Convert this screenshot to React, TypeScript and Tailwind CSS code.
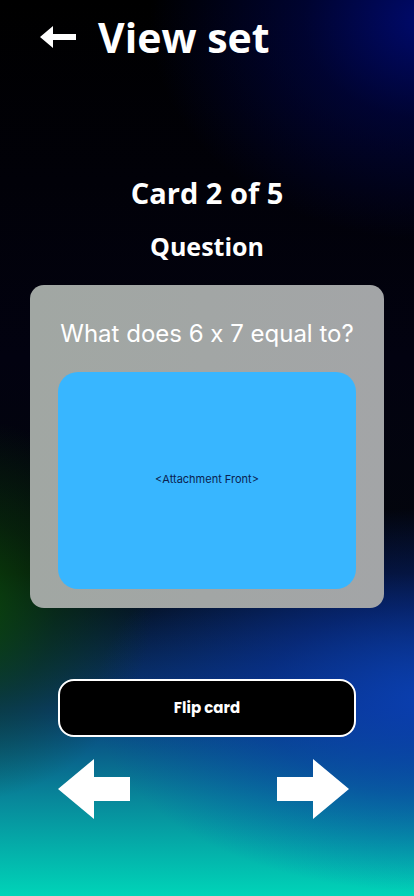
import React from "react";

function BlockArrow({ dir }: { dir: "left" | "right" }) {
  return (
    <svg width="72" height="60" viewBox="0 0 72 60" className={dir === "right" ? "scale-x-[-1]" : ""}>
      <polygon points="0,30 36,0 36,18 72,18 72,42 36,42 36,60" fill="#ffffff" />
    </svg>
  );
}

export default function App() {
  return (
    <div
      className="relative w-[414px] h-[896px] overflow-hidden bg-black bg-[radial-gradient(ellipse_280px_220px_at_430px_20px,#000a6e_0%,rgba(0,6,80,0.6)_45%,transparent_100%),radial-gradient(ellipse_420px_240px_at_430px_700px,#0a3fb0_0%,rgba(8,50,170,0.5)_40%,transparent_80%),radial-gradient(ellipse_240px_240px_at_-40px_610px,#0b4a0a_0%,rgba(10,60,10,0.5)_40%,transparent_80%),linear-gradient(180deg,#000000_0%,#020210_40%,#03060c_64%,#0a3a7a_79%,#08869a_89%,#00d4b8_100%)]"
      style={{ fontFamily: '"Open Sans", "Noto Sans", sans-serif' }}
    >
      <div className="flex flex-col items-center">
        <div className="flex items-center self-stretch pl-[40px] pt-[14px] h-[60px] gap-[22px]">
          <svg width="36" height="22" viewBox="0 0 36 22">
            <polygon points="0,11 13,0 13,8 36,8 36,14 13,14 13,22" fill="#ffffff" />
          </svg>
          <h1 className="text-[41px] font-bold text-white leading-none">View set</h1>
        </div>
        <div className="mt-[118px] text-[29px] font-bold text-white leading-none">Card 2 of 5</div>
        <div className="mt-[27px] text-[25px] font-bold text-white leading-none">Question</div>

        <div className="mt-[26px] w-[354px] h-[323px] rounded-[14px] bg-[linear-gradient(90deg,#a1a7a3_0%,#a3a5a7_100%)] flex flex-col items-center pt-[37px]">
          <p
            className="text-[24px] text-white leading-none font-normal"
            style={{ fontFamily: 'Inter, "Noto Sans", sans-serif', fontFeatureSettings: '"calt" 0' }}
          >
            What does 6 x 7 equal to?
          </p>
          <div className="mt-[26px] w-[298px] h-[217px] rounded-[20px] bg-[#38b6ff] flex items-center justify-center">
            <span
              className="text-[11px] text-[#0a2250] mt-[-2px]"
              style={{ fontFamily: 'Inter, "Noto Sans", sans-serif' }}
            >
              &lt;Attachment Front&gt;
            </span>
          </div>
        </div>

        <button
          className="mt-[71px] w-[298px] h-[58px] rounded-[16px] bg-black border-2 border-white text-white text-[15px] font-bold"
          style={{ fontFamily: 'Poppins, "Open Sans", sans-serif' }}
        >
          Flip card
        </button>

        <div className="mt-[22px] w-[298px] flex justify-between pr-[7px]">
          <BlockArrow dir="left" />
          <BlockArrow dir="right" />
        </div>
      </div>
    </div>
  );
}
